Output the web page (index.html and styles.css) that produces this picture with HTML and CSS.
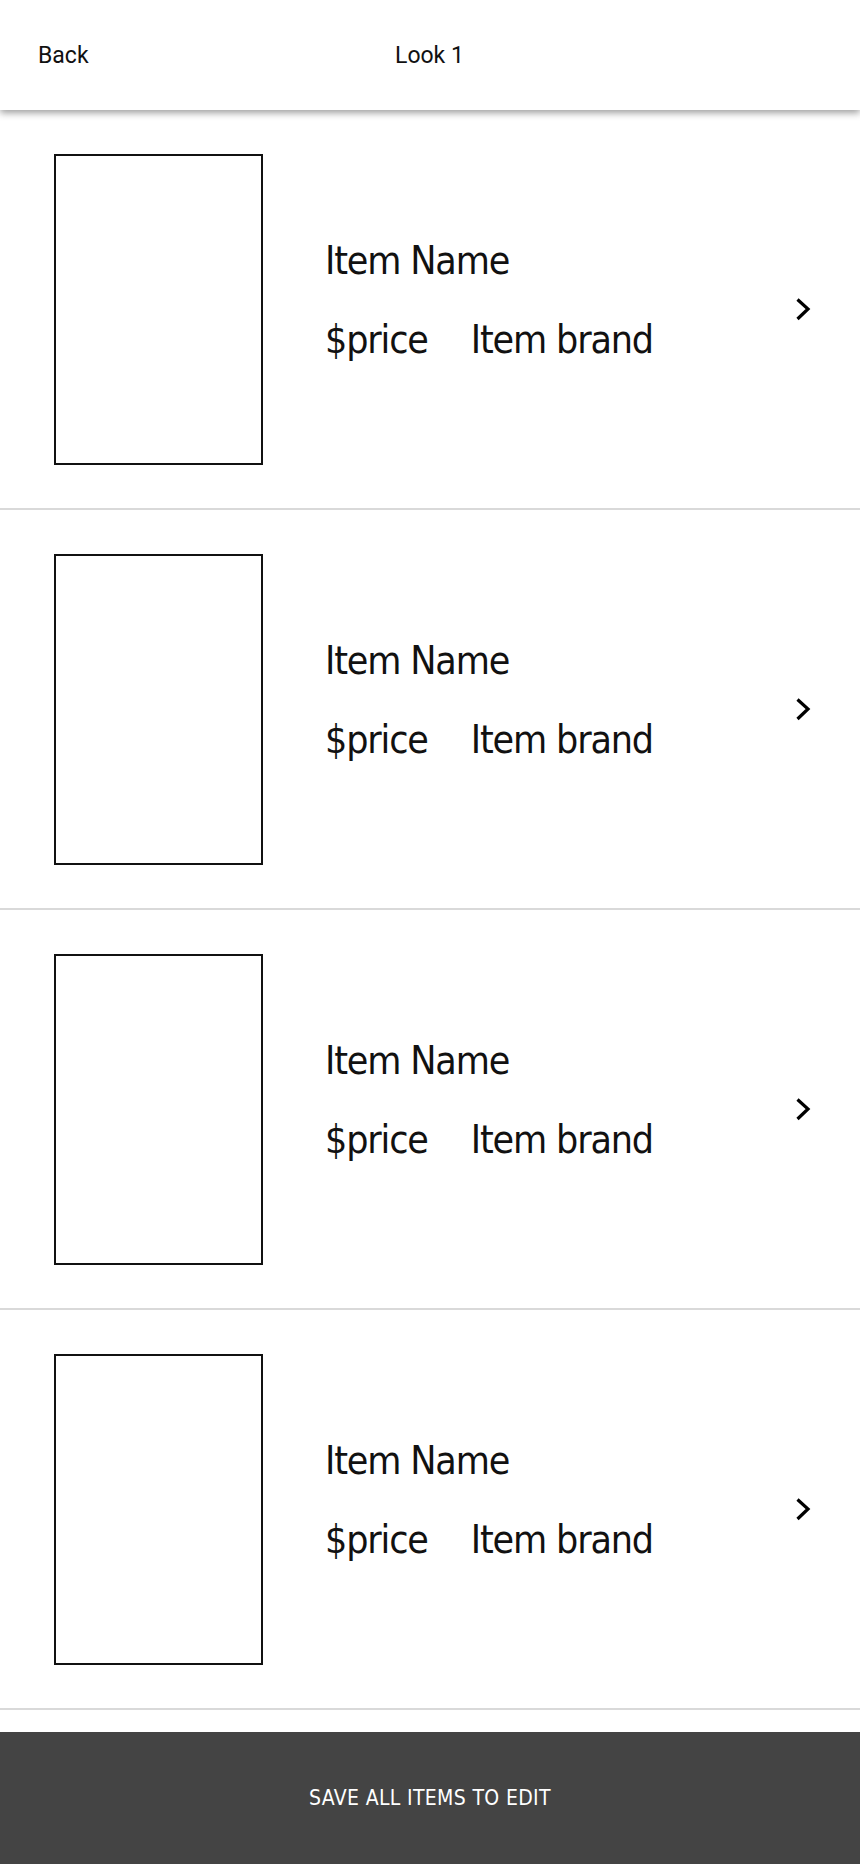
FILE: index.html
```html
<!DOCTYPE html>
<html lang="en">
<head>
<meta charset="utf-8">
<title>Look 1</title>
<link rel="stylesheet" href="styles.css">
</head>
<body>
<div class="screen">
  <header class="topbar">
    <span class="back">Back</span>
    <span class="title">Look 1</span>
  </header>
  <main class="list">
    <div class="row">
      <div class="thumb"></div>
      <div class="info">
        <div class="name">Item Name</div>
        <div class="meta"><span class="price">$price</span><span class="brand">Item brand</span></div>
      </div>
      <svg class="chev" width="20" height="30" viewBox="0 0 20 30"><polyline points="5.5,5.5 16,15 5.5,25" fill="none" stroke="#000" stroke-width="3.2"/></svg>
    </div>
    <div class="row">
      <div class="thumb"></div>
      <div class="info">
        <div class="name">Item Name</div>
        <div class="meta"><span class="price">$price</span><span class="brand">Item brand</span></div>
      </div>
      <svg class="chev" width="20" height="30" viewBox="0 0 20 30"><polyline points="5.5,5.5 16,15 5.5,25" fill="none" stroke="#000" stroke-width="3.2"/></svg>
    </div>
    <div class="row">
      <div class="thumb"></div>
      <div class="info">
        <div class="name">Item Name</div>
        <div class="meta"><span class="price">$price</span><span class="brand">Item brand</span></div>
      </div>
      <svg class="chev" width="20" height="30" viewBox="0 0 20 30"><polyline points="5.5,5.5 16,15 5.5,25" fill="none" stroke="#000" stroke-width="3.2"/></svg>
    </div>
    <div class="row">
      <div class="thumb"></div>
      <div class="info">
        <div class="name">Item Name</div>
        <div class="meta"><span class="price">$price</span><span class="brand">Item brand</span></div>
      </div>
      <svg class="chev" width="20" height="30" viewBox="0 0 20 30"><polyline points="5.5,5.5 16,15 5.5,25" fill="none" stroke="#000" stroke-width="3.2"/></svg>
    </div>
  </main>
  <footer class="save">SAVE ALL ITEMS TO EDIT</footer>
</div>
</body>
</html>
```

FILE: styles.css
```css
* { box-sizing: border-box; }
html, body { margin: 0; padding: 0; background: #fff; }
.screen {
  width: 860px;
  height: 1864px;
  display: flex;
  flex-direction: column;
  overflow: hidden;
}
.topbar {
  position: relative;
  z-index: 2;
  flex: 0 0 110px;
  height: 110px;
  background: #fff;
  display: flex;
  align-items: center;
  padding-left: 38px;
  font-family: Roboto, "Liberation Sans", sans-serif;
  font-size: 23px;
  color: #111;
  box-shadow: 0 3px 7px rgba(0,0,0,0.38);
}
.back { width: 357px; }
.list {
  flex: 1 1 auto;
  overflow: hidden;
  font-family: "DejaVu Sans Condensed", "DejaVu Sans", sans-serif;
  font-stretch: condensed;
  color: #111;
}
.row {
  height: 400px;
  display: flex;
  align-items: center;
  padding: 0 48px 0 54px;
  border-bottom: 2px solid #d9d9d9;
}
.thumb {
  flex: 0 0 209px;
  width: 209px;
  height: 311px;
  border: 2px solid #111;
  background: #fff;
}
.info {
  flex: 1 1 auto;
  margin-left: 62px;
  padding-bottom: 17px;
  font-size: 39px;
  line-height: 44px;
  letter-spacing: -1.15px;
}
.meta { margin-top: 35px; display: flex; }
.price { margin-right: 43px; }
.chev { flex: 0 0 20px; display: block; }
.save {
  flex: 0 0 132px;
  height: 132px;
  background: #444;
  color: #fff;
  display: flex;
  align-items: center;
  justify-content: center;
  font-family: "DejaVu Sans Condensed", "DejaVu Sans", sans-serif;
  font-stretch: condensed;
  font-size: 21px;
  letter-spacing: 0.35px;
}
```
